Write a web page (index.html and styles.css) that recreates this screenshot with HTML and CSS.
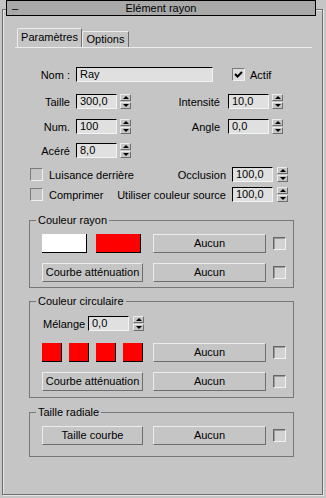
FILE: index.html
```html
<!DOCTYPE html>
<html lang="fr">
<head>
    <meta charset="UTF-8">
    <title>Elément rayon</title>
    <link rel="stylesheet" href="styles.css">
</head>
<body>
    <div class="rollout">
        <div class="title-bar">
            <span class="collapse">–</span>
            <span class="title">Elément rayon</span>
        </div>
        <div class="frame">
            <div class="tabs">
                <div class="tab active">Paramètres</div>
                <div class="tab">Options</div>
            </div>

            <div class="row row-nom">
                <span class="lbl">Nom :</span>
                <div class="field field-name">Ray</div>
                <span class="check checked">
                    <svg width="11" height="11" viewBox="0 0 11 11"><path d="M2 5 L4.5 7.5 L9 3" fill="none" stroke="#000" stroke-width="2"/></svg>
                </span>
                <span class="check-text">Actif</span>
            </div>

            <div class="row row-taille">
                <span class="lbl">Taille</span>
                <div class="field num">300,0</div>
                <div class="spin"><span class="up"></span><span class="down"></span></div>
                <span class="lbl lbl-right">Intensité</span>
                <div class="field num">10,0</div>
                <div class="spin"><span class="up"></span><span class="down"></span></div>
            </div>

            <div class="row row-num">
                <span class="lbl">Num.</span>
                <div class="field num">100</div>
                <div class="spin"><span class="up"></span><span class="down"></span></div>
                <span class="lbl lbl-right">Angle</span>
                <div class="field num">0,0</div>
                <div class="spin"><span class="up"></span><span class="down"></span></div>
            </div>

            <div class="row row-acere">
                <span class="lbl">Acéré</span>
                <div class="field num">8,0</div>
                <div class="spin"><span class="up"></span><span class="down"></span></div>
            </div>

            <div class="row row-opt row-luisance">
                <span class="check"></span>
                <span class="check-text">Luisance derrière</span>
                <span class="lbl-far">Occlusion</span>
                <div class="field num">100,0</div>
                <div class="spin spin-far"><span class="up"></span><span class="down"></span></div>
            </div>

            <div class="row row-opt row-comprimer">
                <span class="check"></span>
                <span class="check-text">Comprimer</span>
                <span class="lbl-far">Utiliser couleur source</span>
                <div class="field num">100,0</div>
                <div class="spin spin-far"><span class="up"></span><span class="down"></span></div>
            </div>

            <div class="group group-rayon">
                <div class="group-title">Couleur rayon</div>
                <div class="group-row first">
                    <div class="swatch white"></div>
                    <div class="swatch red"></div>
                    <div class="btn btn-map">Aucun</div>
                    <span class="mini-check"></span>
                </div>
                <div class="group-row">
                    <div class="btn btn-curve">Courbe atténuation</div>
                    <div class="btn btn-map">Aucun</div>
                    <span class="mini-check"></span>
                </div>
            </div>

            <div class="group group-circ">
                <div class="group-title">Couleur circulaire</div>
                <div class="group-row melange">
                    <span class="lbl-melange">Mélange</span>
                    <div class="field num">0,0</div>
                    <div class="spin spin-far"><span class="up"></span><span class="down"></span></div>
                </div>
                <div class="group-row squares">
                    <div class="swatch small red"></div>
                    <div class="swatch small red"></div>
                    <div class="swatch small red"></div>
                    <div class="swatch small red"></div>
                    <div class="btn btn-map">Aucun</div>
                    <span class="mini-check"></span>
                </div>
                <div class="group-row">
                    <div class="btn btn-curve">Courbe atténuation</div>
                    <div class="btn btn-map">Aucun</div>
                    <span class="mini-check"></span>
                </div>
            </div>

            <div class="group group-radial">
                <div class="group-title">Taille radiale</div>
                <div class="group-row first">
                    <div class="btn btn-curve">Taille courbe</div>
                    <div class="btn btn-map">Aucun</div>
                    <span class="mini-check"></span>
                </div>
            </div>
        </div>
    </div>
</body>
</html>
```

FILE: styles.css
```css
* {
    box-sizing: border-box;
    margin: 0;
    padding: 0;
}

html, body {
    width: 100%;
    height: 100%;
}

body {
    background: #c5c5c5;
    font-family: "Liberation Sans", Arial, sans-serif;
    font-size: 11px;
    color: #000;
    white-space: nowrap;
}

.rollout {
    width: 326px;
}

/* title bar sits over the top line of the frame */
.title-bar {
    position: relative;
    z-index: 1;
    display: flex;
    align-items: center;
    height: 16px;
    margin: 0 10px 0 6px;
    background: #a8a8a8;
    border: 1px solid #000;
    line-height: 14px;
}

.collapse {
    width: 12px;
    padding-left: 5px;
}

.title {
    flex: 1;
    text-align: center;
    padding-right: 12px;
}

.frame {
    height: 486px;
    margin: -7px 3px 0 2px;
    border: 1px solid #6e6e6e;
    box-shadow: 1px 1px 0 #e6e6e6, inset 1px 1px 0 #e6e6e6;
    padding-top: 18px;
}

.tabs {
    display: flex;
    align-items: flex-end;
    width: 297px;
    margin-left: 12px;
    border-bottom: 1px solid #ececec;
}

.tab {
    height: 16px;
    width: 47px;
    line-height: 14px;
    text-align: center;
    border-top: 1px solid #ececec;
    border-left: 1px solid #ececec;
    border-right: 1px solid #6e6e6e;
    border-top-left-radius: 2px;
}

.tab.active {
    height: 19px;
    width: 65px;
    margin-left: 2px;
    line-height: 17px;
}

.row {
    display: flex;
    align-items: center;
    height: 15px;
}

.row-nom {
    margin-top: 19px;
}

.row-taille {
    margin-top: 12px;
}

.row-num {
    margin-top: 10px;
}

.row-acere {
    margin-top: 9px;
}

.row-luisance {
    margin-top: 9px;
}

.row-comprimer {
    margin-top: 5px;
}

.lbl {
    width: 67px;
    margin-right: 6px;
    text-align: right;
}

.lbl-right {
    width: 89px;
    margin-right: 8px;
}

.field {
    height: 15px;
    background: #e0e0e0;
    border: 1px solid;
    border-color: #000 #f4f4f4 #f4f4f4 #000;
    padding-left: 3px;
    line-height: 13px;
}

.field-name {
    width: 137px;
}

.num {
    width: 41px;
}

.spin {
    display: flex;
    flex-direction: column;
    justify-content: space-between;
    width: 11px;
    height: 15px;
    margin-left: 3px;
}

.spin-far {
    margin-left: 4px;
}

.spin span {
    display: flex;
    align-items: center;
    justify-content: center;
    height: 7px;
    border: 1px solid;
    border-color: #ececec #6e6e6e #6e6e6e #ececec;
}

.spin .up::after,
.spin .down::after {
    content: "";
    border-left: 3px solid transparent;
    border-right: 3px solid transparent;
}

.spin .up::after {
    border-bottom: 3px solid #000;
}

.spin .down::after {
    border-top: 3px solid #000;
}

.check {
    display: flex;
    align-items: center;
    justify-content: center;
    width: 13px;
    height: 13px;
    border: 1px solid;
    border-color: #7a7a7a #f0f0f0 #f0f0f0 #7a7a7a;
}

.check.checked {
    margin-left: 19px;
    background: #dcdcdc;
}

.check-text {
    margin-left: 5px;
}

.row-opt {
    padding-right: 34px;
}

.row-opt .check {
    margin-left: 27px;
}

.row-opt .check-text {
    margin-left: 6px;
}

.lbl-far {
    flex: 1;
    text-align: right;
    margin-right: 6px;
}

.group {
    width: 265px;
    margin-left: 26px;
    border: 1px solid #777;
    padding-left: 12px;
}

.group-rayon {
    margin-top: 18px;
    height: 68px;
}

.group-circ {
    margin-top: 13px;
    height: 97px;
}

.group-radial {
    margin-top: 14px;
    height: 45px;
}

.group-title {
    width: max-content;
    margin: -7px 0 0 -6px;
    padding: 0 2px;
    background: #c5c5c5;
    line-height: 13px;
}

.group-row {
    display: flex;
    align-items: center;
    height: 19px;
    margin-top: 10px;
}

.group-row.first {
    margin-top: 7px;
}

.group-row.melange {
    height: 15px;
    margin-top: 8px;
}

.group-row.squares {
    margin-top: 12px;
}

.lbl-melange {
    width: 41px;
    margin-left: 1px;
    margin-right: 4px;
}

.swatch {
    width: 45px;
    height: 19px;
    border-right: 1px solid #000;
    border-bottom: 1px solid #000;
}

.swatch.white {
    background: #fff;
    margin-right: 9px;
}

.swatch.red {
    background: #ff0000;
}

.swatch.small {
    width: 20px;
    margin-right: 7px;
}

.swatch.small:nth-child(4) {
    margin-right: 0;
}

.btn {
    height: 19px;
    border: 1px solid;
    border-color: #ececec #6e6e6e #6e6e6e #ececec;
    text-align: center;
    line-height: 16px;
}

.btn-map {
    width: 113px;
    margin-left: 12px;
}

.btn-curve {
    width: 101px;
}

.btn-curve + .btn-map,
.squares .btn-map {
    margin-left: 10px;
}

.mini-check {
    width: 13px;
    height: 13px;
    margin-left: 7px;
    background: #d2d2d2;
    border: 1px solid;
    border-color: #666 #f0f0f0 #f0f0f0 #666;
    box-shadow: inset 1px 1px 0 #9a9a9a;
}
```
